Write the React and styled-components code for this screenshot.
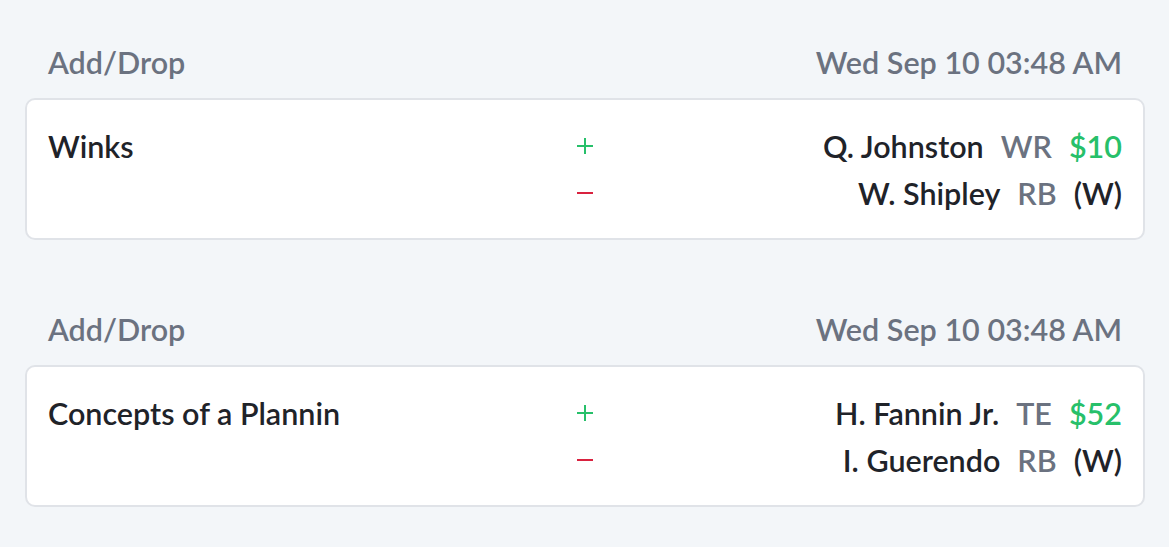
import React from "react";
import styled, { createGlobalStyle } from "styled-components";

const GlobalStyle = createGlobalStyle`
  html, body {
    margin: 0;
    padding: 0;
    background: #f3f6f9;
  }
  body {
    font-family: Lato, "Noto Sans", sans-serif;
    -webkit-font-smoothing: antialiased;
  }
`;

const Page = styled.div`
  display: flex;
  flex-direction: column;
  gap: 69px;
  padding: 42px 24px 40px 25px;
`;

const Section = styled.section`
  display: flex;
  flex-direction: column;
  gap: 16px;
`;

const Header = styled.div`
  display: flex;
  justify-content: space-between;
  align-items: center;
  height: 40px;
  padding: 0 23px;
  font-size: 30.5px;
  font-weight: 600;
  color: #6b7280;
`;

const Card = styled.div`
  display: grid;
  grid-template-columns: 1fr auto 1fr;
  grid-auto-rows: 47px;
  align-items: center;
  padding: 22px 21px;
  background: #ffffff;
  border: 2px solid #e0e3e8;
  border-radius: 10px;
`;

const Team = styled.div`
  font-size: 30.5px;
  font-weight: 600;
  color: #1f2329;
  white-space: nowrap;
`;

const Symbol = styled.div`
  display: flex;
  align-items: center;
  justify-content: center;
  width: 20px;
  color: ${(p) => (p.$type === "add" ? "#27c06a" : "#d9223f")};
`;

const Player = styled.div`
  display: flex;
  justify-content: flex-end;
  align-items: baseline;
  gap: 17px;
  font-size: 30.5px;
  font-weight: 600;
  white-space: nowrap;
`;

const Name = styled.span`
  color: #1f2329;
`;

const Pos = styled.span`
  color: #6b7280;
`;

const Tag = styled.span`
  color: ${(p) => (p.$price ? "#27c06a" : "#1f2329")};
`;

const PlusIcon = () => (
  <svg width="18" height="18" viewBox="0 0 18 18">
    <path d="M9 1v16M1 9h16" stroke="currentColor" strokeWidth="2" fill="none" />
  </svg>
);

const MinusIcon = () => (
  <svg width="18" height="18" viewBox="0 0 18 18">
    <path d="M1 9h16" stroke="currentColor" strokeWidth="2" fill="none" />
  </svg>
);

const data = [
  {
    date: "Wed Sep 10 03:48 AM",
    team: "Winks",
    add: { name: "Q. Johnston", pos: "WR", tag: "$10" },
    drop: { name: "W. Shipley", pos: "RB", tag: "(W)" },
  },
  {
    date: "Wed Sep 10 03:48 AM",
    team: "Concepts of a Plannin",
    add: { name: "H. Fannin Jr.", pos: "TE", tag: "$52" },
    drop: { name: "I. Guerendo", pos: "RB", tag: "(W)" },
  },
];

export default function App() {
  return (
    <>
      <GlobalStyle />
      <Page>
        {data.map((t, i) => (
          <Section key={i}>
            <Header>
              <span>Add/Drop</span>
              <span>{t.date}</span>
            </Header>
            <Card>
              <Team>{t.team}</Team>
              <Symbol $type="add">
                <PlusIcon />
              </Symbol>
              <Player>
                <Name>{t.add.name}</Name>
                <Pos>{t.add.pos}</Pos>
                <Tag $price>{t.add.tag}</Tag>
              </Player>
              <div />
              <Symbol $type="drop">
                <MinusIcon />
              </Symbol>
              <Player>
                <Name>{t.drop.name}</Name>
                <Pos>{t.drop.pos}</Pos>
                <Tag>{t.drop.tag}</Tag>
              </Player>
            </Card>
          </Section>
        ))}
      </Page>
    </>
  );
}
